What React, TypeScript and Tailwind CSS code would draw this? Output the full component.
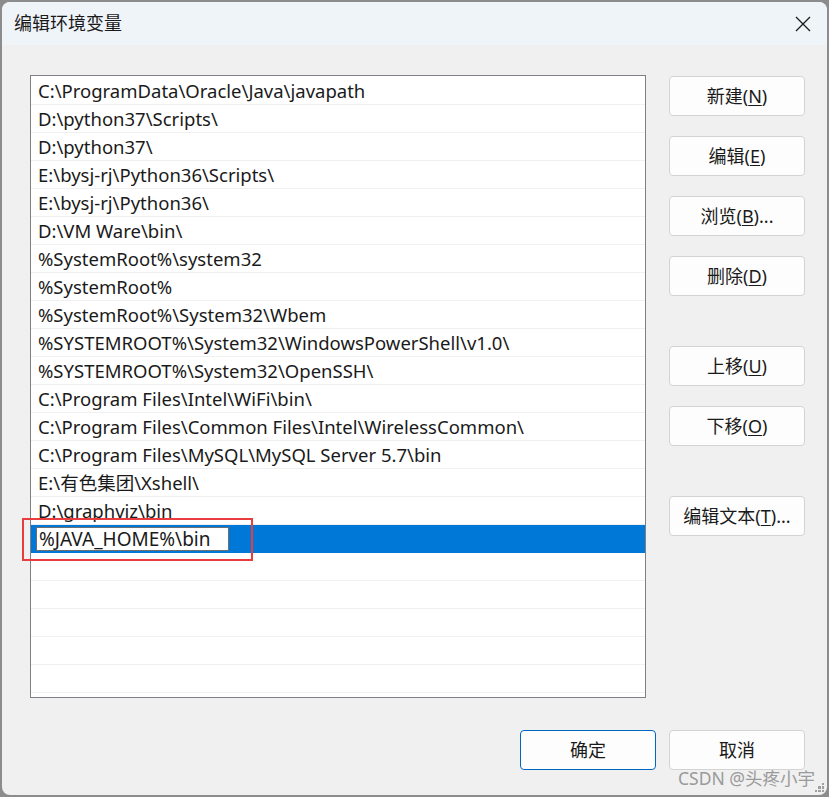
const paths = [
  "C:\\ProgramData\\Oracle\\Java\\javapath",
  "D:\\python37\\Scripts\\",
  "D:\\python37\\",
  "E:\\bysj-rj\\Python36\\Scripts\\",
  "E:\\bysj-rj\\Python36\\",
  "D:\\VM Ware\\bin\\",
  "%SystemRoot%\\system32",
  "%SystemRoot%",
  "%SystemRoot%\\System32\\Wbem",
  "%SYSTEMROOT%\\System32\\WindowsPowerShell\\v1.0\\",
  "%SYSTEMROOT%\\System32\\OpenSSH\\",
  "C:\\Program Files\\Intel\\WiFi\\bin\\",
  "C:\\Program Files\\Common Files\\Intel\\WirelessCommon\\",
  "C:\\Program Files\\MySQL\\MySQL Server 5.7\\bin",
  "E:\\有色集团\\Xshell\\",
  "D:\\graphviz\\bin",
];

const font = { fontFamily: '"Noto Sans", "Noto Sans CJK SC", sans-serif' };

function Btn({ label, accel, suffix = "", primary = false }: { label: string; accel?: string; suffix?: string; primary?: boolean }) {
  return (
    <button
      className={`w-[136px] h-[40px] rounded-[4px] bg-[#fdfdfd] text-[18px] text-[#1a1a1a] flex items-center justify-center border ${
        primary ? "border-[#0067c0]" : "border-[#d3d3d3]"
      }`}
    >
      {label}
      {accel && (
        <>
          (<span className="underline underline-offset-2">{accel}</span>){suffix}
        </>
      )}
    </button>
  );
}

export default function App() {
  return (
    <div className="w-[829px] h-[797px] bg-[#8c8c8c] pt-[2px] pl-[2px] overflow-hidden" style={font}>
      <div className="w-[825px] h-[793px] rounded-[8px] bg-[#f0f0f0] overflow-hidden flex flex-col relative">
        {/* title bar */}
        <div className="h-[43px] bg-[#eff4f9] flex items-center justify-between pl-[12px] pr-[16px]">
          <span className="text-[18px] text-[#1a1a1a]">编辑环境变量</span>
          <svg width="16" height="16" viewBox="0 0 16 16" className="text-[#1a1a1a]">
            <path d="M1 1 L15 15 M15 1 L1 15" stroke="currentColor" strokeWidth="1.3" fill="none" />
          </svg>
        </div>

        <div className="flex-1 flex flex-col pl-[28px] pr-[22px] pt-[30px]">
          <div className="flex gap-[23px] relative">
            {/* list */}
            <div className="w-[616px] h-[623px] border border-[#7f7f87] bg-white pt-[1px] overflow-hidden">
              {paths.map((p) => (
                <div key={p} className="h-[28px] border-b border-[#f0f0f0] flex items-center pl-[7px] text-[18.5px] text-[#1a1a1a] whitespace-nowrap">
                  {p}
                </div>
              ))}
              <div className="h-[28px] bg-[#0078d7] flex items-center pl-[5px]">
                <div className="w-[193px] h-[24px] bg-white border border-[#6e6e6e] flex items-center pl-[2px] text-[19px] leading-none text-[#1a1a1a] whitespace-nowrap">
                  %JAVA_HOME%\bin
                </div>
              </div>
              {Array.from({ length: 5 }).map((_, i) => (
                <div key={i} className="h-[28px] border-b border-[#f0f0f0]" />
              ))}
            </div>

            {/* annotation */}
            <div className="absolute left-[-8px] top-[443px] w-[231px] h-[43px] border-2 border-[#e83c3e]" />

            {/* side buttons */}
            <div className="flex flex-col pt-[1px]">
              <div className="flex flex-col gap-[20px]">
                <Btn label="新建" accel="N" />
                <Btn label="编辑" accel="E" />
                <Btn label="浏览" accel="B" suffix="..." />
                <Btn label="删除" accel="D" />
              </div>
              <div className="flex flex-col gap-[20px] mt-[50px]">
                <Btn label="上移" accel="U" />
                <Btn label="下移" accel="O" />
              </div>
              <div className="mt-[50px]">
                <Btn label="编辑文本" accel="T" suffix="..." />
              </div>
            </div>
          </div>

          <div className="flex justify-end gap-[13px] mt-[32px]">
            <Btn label="确定" primary />
            <Btn label="取消" />
          </div>
        </div>

        {/* watermark */}
        <div className="absolute right-[12px] bottom-[4px] text-[17.5px] text-[#9a9a9a]">CSDN @头疼小宇</div>
        <div className="absolute right-[3px] bottom-[3px] grid grid-cols-3 gap-[1px] w-[9px] h-[9px]">
          <span />
          <span />
          <span className="bg-[#a0a0a0]" />
          <span />
          <span className="bg-[#a0a0a0]" />
          <span className="bg-[#a0a0a0]" />
          <span className="bg-[#a0a0a0]" />
          <span className="bg-[#a0a0a0]" />
          <span className="bg-[#a0a0a0]" />
        </div>
      </div>
    </div>
  );
}
